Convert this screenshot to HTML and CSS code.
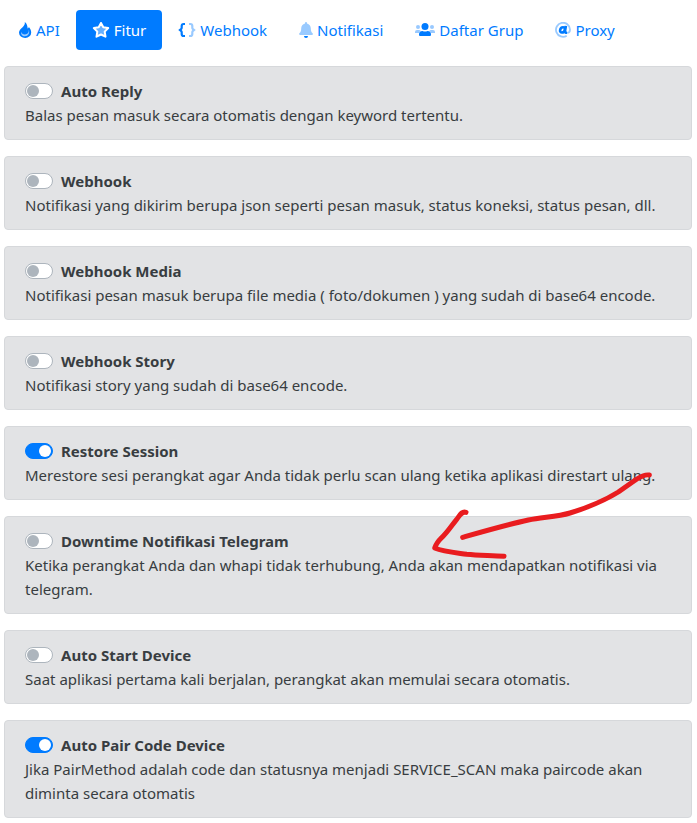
FILE: index.html
```html
<!doctype html>
<html lang="id">
<head>
<meta charset="utf-8">
<meta name="viewport" content="width=device-width, initial-scale=1">
<title>Fitur</title>
<link rel="stylesheet" href="styles.css">
</head>
<body>
<nav class="nav">
	<a class="nav-link" href="#api">
		<svg class="icon icon-14" viewBox="0 0 14 16"><path fill="currentColor" d="M6.800 0C7.200 2.200 6.200 3.600 4.600 5.200 2.600 7 1 8.400 1 10.700A6.100 5.300 0 0 0 13.200 10.500C13.200 8.200 12.200 6.500 10.900 5 10.600 5.800 10.200 6.200 9.600 6.600 9.600 4 8.900 1.600 6.800 0Z"/><path fill="#99caff" d="M10.800 7.800C11 10.800 9.400 12.400 6.900 12.400 4.900 12.400 3.600 11.400 3.300 9.700 2.600 12.200 4.200 14.300 6.900 14.300 10.300 14.300 12 11.300 10.800 7.800Z"/></svg>
		API
	</a>
	<a class="nav-link active" href="#fitur">
		<svg class="icon icon-18" viewBox="0 0 18 16"><path fill="#66b0ff" stroke="currentColor" stroke-width="2" stroke-linejoin="round" d="M9 1 11.300 5.300 16.200 6.100 12.700 9.600 13.500 14.700 9 12.500 4.500 14.700 5.300 9.600 1.800 6.100 6.700 5.300Z"/></svg>
		Fitur
	</a>
	<a class="nav-link" href="#webhook">
		<svg class="icon icon-18" viewBox="0 0 18 16" fill="none" stroke="currentColor" stroke-width="2.200"><path d="M7 2H5.600Q3.700 2 3.700 4V5.800Q3.700 6.600 3 7.200L2 8 3 8.800Q3.700 9.400 3.700 10.200V12Q3.700 14 5.600 14H7"/><path class="faded" d="M11 2H12.400Q14.300 2 14.300 4V5.800Q14.300 6.600 15 7.200L16 8 15 8.800Q14.300 9.400 14.300 10.200V12Q14.300 14 12.400 14H11"/></svg>
		Webhook
	</a>
	<a class="nav-link" href="#notifikasi">
		<svg class="icon icon-14" viewBox="0 0 14 16" fill="currentColor"><path class="faded" d="M7 0A1 1 0 0 0 6 1V1.600C3.700 2.100 2.200 4 2.200 6.500 2.200 9.300 1.500 10.200 .4 11.300-.3 12 .1 13 1 13H13C13.900 13 14.300 12 13.600 11.300 12.500 10.200 11.800 9.300 11.800 6.500 11.800 4 10.300 2.100 8 1.600V1A1 1 0 0 0 7 0Z"/><path d="M5 14H9A2 2 0 0 1 5 14Z"/></svg>
		Notifikasi
	</a>
	<a class="nav-link" href="#grup">
		<svg class="icon icon-20" viewBox="0 0 20 16" fill="currentColor"><g class="faded"><circle cx="3" cy="5" r="2"/><circle cx="17" cy="5" r="2"/><path d="M2 8H4Q5 8 5.600 8.700 4.300 9.600 4 11H0V10Q0 8 2 8ZM18 8H16Q15 8 14.400 8.700 15.700 9.600 16 11H20V10Q20 8 18 8Z"/></g><circle cx="10" cy="4.500" r="3.500"/><path d="M7.600 9Q8.800 9.600 10 9.600T12.400 9Q16 9 16 12.400V13Q16 14 15 14H5Q4 14 4 13V12.400Q4 9 7.600 9Z"/></svg>
		Daftar Grup
	</a>
	<a class="nav-link" href="#proxy">
		<svg class="icon icon-16" viewBox="0 0 16 16" fill="none" stroke="currentColor"><path class="faded" stroke-width="1.800" d="M11.700 13.700A7 7 0 1 1 15 7.500C15 9.600 13.700 10.900 12 10.900"/><path stroke-width="2.600" d="M9.900 7.200C9.600 9.300 8.300 10.500 6.900 10.500 5.500 10.500 4.900 9.500 5.100 8.200 5.400 6.400 6.500 5.300 8 5.300 9.400 5.300 10.100 6 9.900 7.200ZM10.900 3.900 10 9.300Q9.900 10.700 11 10.700H12"/></svg>
		Proxy
	</a>
</nav>

<main class="features">
	<div class="card">
		<label class="switch"><input type="checkbox"> Auto Reply</label>
		<p>Balas pesan masuk secara otomatis dengan keyword tertentu.</p>
	</div>
	<div class="card">
		<label class="switch"><input type="checkbox"> Webhook</label>
		<p>Notifikasi yang dikirim berupa json seperti pesan masuk, status koneksi, status pesan, dll.</p>
	</div>
	<div class="card">
		<label class="switch"><input type="checkbox"> Webhook Media</label>
		<p>Notifikasi pesan masuk berupa file media ( foto/dokumen ) yang sudah di base64 encode.</p>
	</div>
	<div class="card">
		<label class="switch"><input type="checkbox"> Webhook Story</label>
		<p>Notifikasi story yang sudah di base64 encode.</p>
	</div>
	<div class="card">
		<label class="switch"><input type="checkbox" checked> Restore Session</label>
		<p>Merestore sesi perangkat agar Anda tidak perlu scan ulang ketika aplikasi direstart ulang.</p>
	</div>
	<div class="card">
		<label class="switch"><input type="checkbox"> Downtime Notifikasi Telegram</label>
		<p>Ketika perangkat Anda dan whapi tidak terhubung, Anda akan mendapatkan notifikasi via telegram.</p>
	</div>
	<div class="card">
		<label class="switch"><input type="checkbox"> Auto Start Device</label>
		<p>Saat aplikasi pertama kali berjalan, perangkat akan memulai secara otomatis.</p>
	</div>
	<div class="card">
		<label class="switch"><input type="checkbox" checked> Auto Pair Code Device</label>
		<p>Jika PairMethod adalah code dan statusnya menjadi SERVICE_SCAN maka paircode akan diminta secara otomatis</p>
	</div>
</main>

<!-- hand-drawn arrow over the cards -->
<svg class="arrow" viewBox="0 0 831 330" aria-hidden="true">
	<path d="M688 45C672 42 657 53 643 62L595 96C550 124 495 145 450 159C410 171 365 171 325 180C265 193 195 213 128 232"/>
	<path d="M138 157C124 153 119 167 110 178C94 198 82 217 66 232C55 243 48 252 44 264C70 275 105 278 140 283C177 287 215 286 252 289"/>
</svg>
</body>
</html>
```

FILE: styles.css
```css
*{
	box-sizing:border-box;
}
body{
	margin:0;
	padding:10px 5px 4px 4px;
	position:relative;
	background-color:#fff;
	color:#383d41;
	font-family:"Segoe UI","Noto Sans",sans-serif;
	font-size:15px;
	line-height:24px;
}
.nav{
	display:flex;
	flex-wrap:wrap;
	margin:0 0 16px -2px;
}
.nav-link{
	display:flex;
	align-items:center;
	gap:4px;
	padding:8px 16px;
	border-radius:4px;
	color:#007bff;
	text-decoration:none;
}
.nav-link.active{
	color:#fff;
	background-color:#007bff;
}
.icon{
	height:16px;
	flex:none;
}
.icon-14{
	width:14px;
}
.icon-16{
	width:16px;
}
.icon-18{
	width:18px;
}
.icon-20{
	width:20px;
}
.faded{
	opacity:.4;
}
.features{
	display:flex;
	flex-direction:column;
	gap:16px;
}
.card{
	padding:12px 20px;
	border:1px solid #d6d8db;
	border-radius:4px;
	background-color:#e2e3e5;
}
.card p{
	margin:0;
}
.switch{
	display:flex;
	align-items:center;
	gap:8px;
	font-weight:bold;
}
.switch input{
	appearance:none;
	flex:none;
	width:28px;
	height:16px;
	margin:0;
	padding:1px;
	border:1px solid #adb5bd;
	border-radius:8px;
	background-color:#fff;
}
.switch input::before{
	content:"";
	display:block;
	width:12px;
	height:12px;
	border-radius:50%;
	background-color:#adb5bd;
}
.switch input:checked{
	border-color:#007bff;
	background-color:#007bff;
}
.switch input:checked::before{
	margin-left:auto;
	background-color:#fff;
}
.arrow{
	position:absolute;
	top:460px;
	left:420px;
	width:277px;
	height:110px;
	fill:none;
	stroke:#e91c1f;
	stroke-width:15;
	stroke-linecap:round;
	stroke-linejoin:round;
	pointer-events:none;
}
```
